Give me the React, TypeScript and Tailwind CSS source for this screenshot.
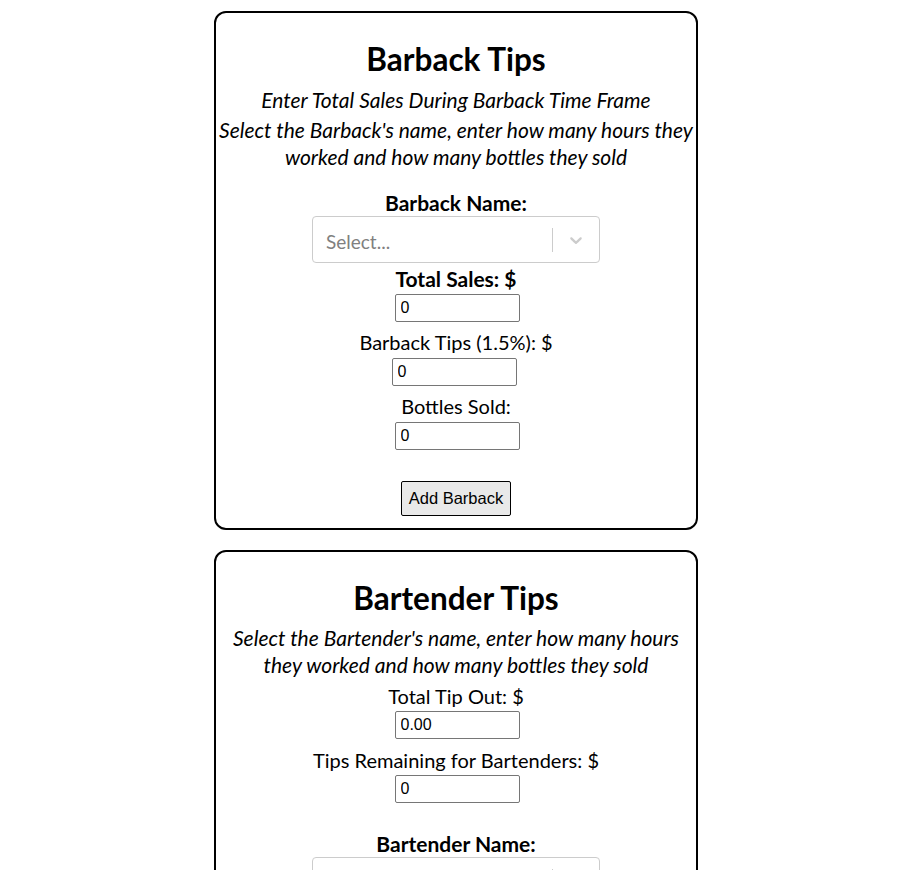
import { ReactNode } from 'react'

const FONT = "font-['Lato','Noto_Sans',sans-serif]"

function NumInput({ value, shift = 'mt-[2px] translate-x-[1px]' }: { value: string; shift?: string }) {
  return (
    <input
      readOnly
      value={value}
      className={`block w-[125px] h-[28px] border border-[#767676] rounded-[2px] px-[5px] text-[16px] text-black font-['Liberation_Sans',Arial,sans-serif] bg-white ${shift}`}
    />
  )
}

function Label({ children, bold = false, className = '' }: { children: ReactNode; bold?: boolean; className?: string }) {
  return (
    <p className={`leading-[27px] text-black ${bold ? 'text-[21px] font-bold' : 'text-[20px]'} ${className}`}>{children}</p>
  )
}

function NameSelect() {
  return (
    <div className="w-[288px] h-[47px] border border-[#cccccc] rounded-[4px] bg-white flex items-center text-left">
      <span className="flex-1 pl-[13px] pt-[5px] text-[19px] text-[#808080]">Select...</span>
      <span className="w-px h-[24px] bg-[#cccccc]" />
      <span className="w-[46px] flex items-center justify-center">
        <svg width="20" height="20" viewBox="0 0 20 20" fill="#cccccc">
          <path d="M4.516 7.548c0.436-0.446 1.043-0.481 1.576 0l3.908 3.747 3.908-3.747c0.533-0.481 1.141-0.446 1.574 0 0.436 0.445 0.408 1.197 0 1.615-0.406 0.418-4.695 4.502-4.695 4.502-0.217 0.223-0.502 0.335-0.787 0.335s-0.57-0.112-0.789-0.335c0 0-4.287-4.084-4.695-4.502s-0.436-1.170 0-1.615z" />
        </svg>
      </span>
    </div>
  )
}

function Card({ children, className = '' }: { children: ReactNode; className?: string }) {
  return (
    <div className={`w-[484px] border-2 border-black rounded-[12px] flex flex-col items-center text-center ${className}`}>
      {children}
    </div>
  )
}

export default function App() {
  return (
    <div className={`w-[912px] min-h-[870px] bg-white flex flex-col items-center pt-[11px] gap-[20px] ${FONT}`}>
      <Card className="pt-[26px] pb-[12px]">
        <h1 className="text-[31.5px] leading-[40px] font-bold">Barback Tips</h1>
        <p className="mt-[7px] text-[21px] leading-[27px] italic">Enter Total Sales During Barback Time Frame</p>
        <p className="mt-[3px] text-[21px] leading-[27px] italic">
          Select the Barback's name, enter how many hours they worked and how many bottles they sold
        </p>
        <Label bold className="mt-[19px]">Barback Name:</Label>
        <NameSelect />
        <Label bold className="mt-[2px]">Total Sales: $</Label>
        <NumInput value="0" />
        <Label className="mt-[7px]">Barback Tips (1.5%): $</Label>
        <NumInput value="0" shift="mt-[2px] -translate-x-[2px]" />
        <Label className="mt-[7px]">Bottles Sold:</Label>
        <NumInput value="0" />
        <button className="mt-[31px] w-[110px] h-[35px] border border-black rounded-[2px] bg-[#e9e9e9] text-[16.5px] text-black font-['Liberation_Sans',Arial,sans-serif]">
          Add Barback
        </button>
      </Card>

      <Card className="pt-[26px] pb-[40px]">
        <h1 className="text-[31.5px] leading-[40px] font-bold">Bartender Tips</h1>
        <p className="mt-[6px] text-[21px] leading-[27px] italic">
          Select the Bartender's name, enter how many hours they worked and how many bottles they sold
        </p>
        <Label className="mt-[5px]">Total Tip Out: $</Label>
        <NumInput value="0.00" shift="mt-[1px] translate-x-[1px]" />
        <Label className="mt-[8px]">Tips Remaining for Bartenders: $</Label>
        <NumInput value="0" shift="mt-[1px] translate-x-[1px]" />
        <Label bold className="mt-[27px]">Bartender Name:</Label>
        <NameSelect />
      </Card>
    </div>
  )
}
